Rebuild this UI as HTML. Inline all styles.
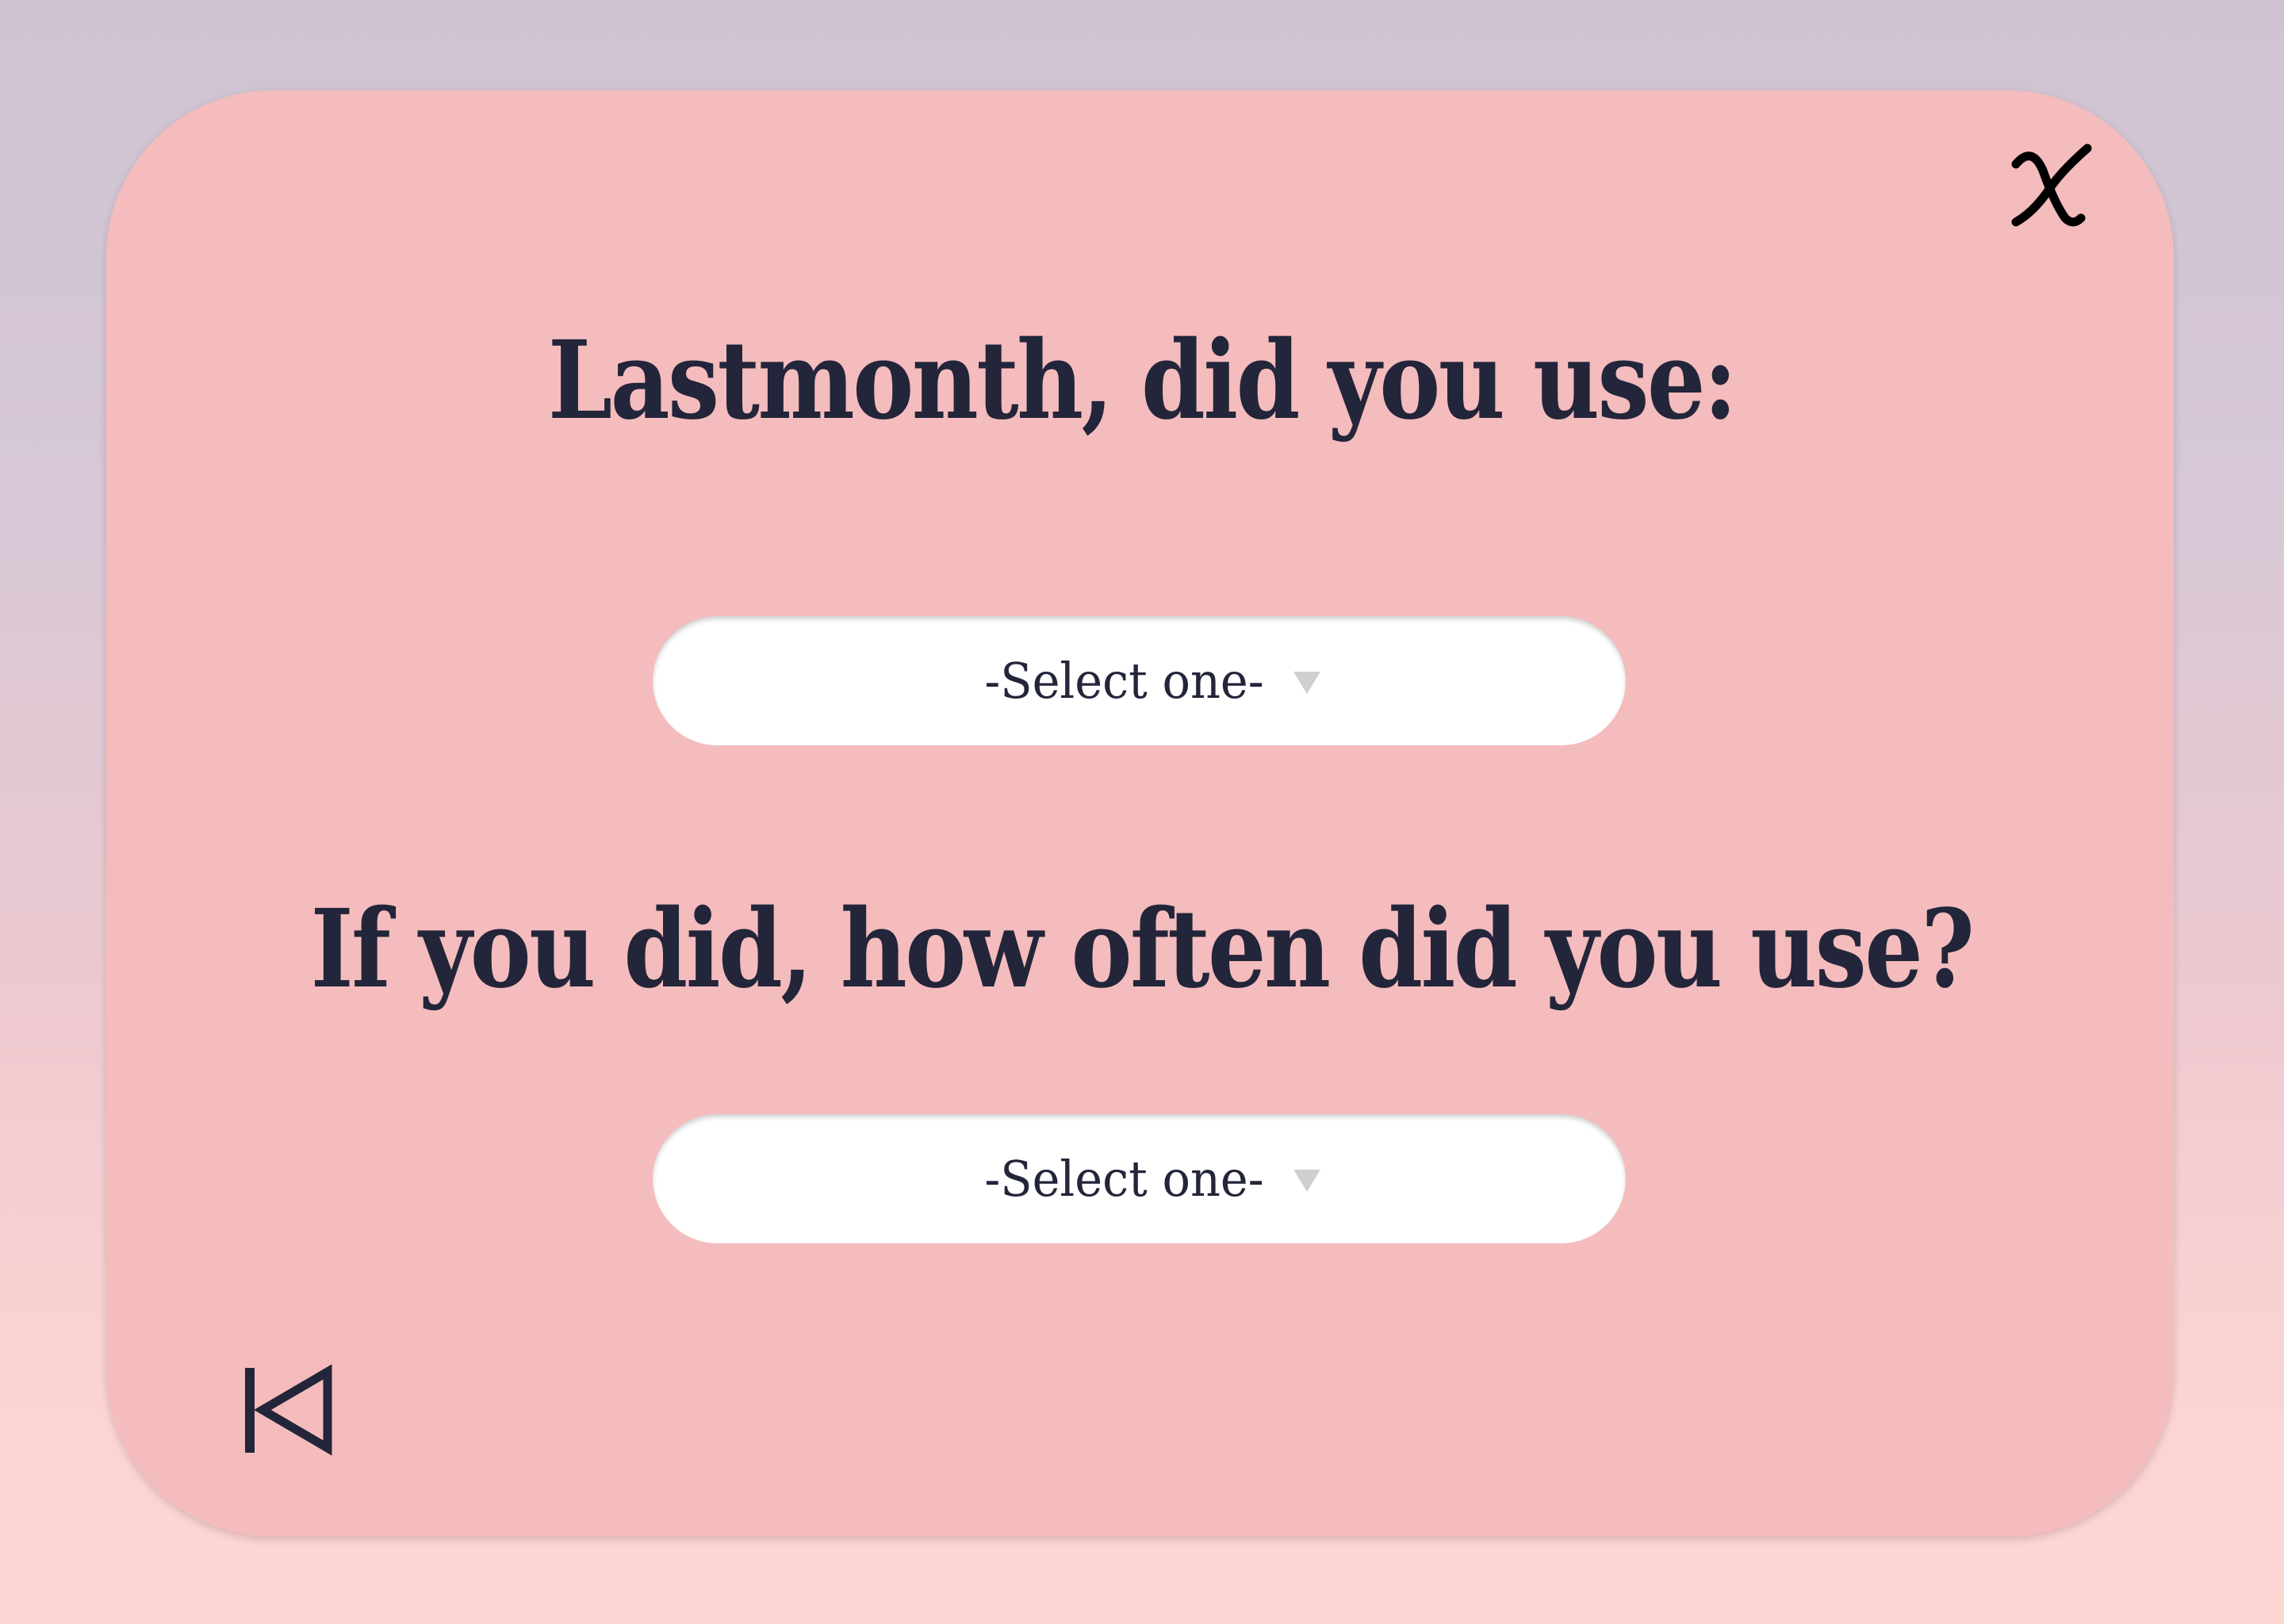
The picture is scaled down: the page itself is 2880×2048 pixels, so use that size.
<!DOCTYPE html>
<html><head><meta charset="utf-8"><style>
html,body{margin:0;padding:0;}
body{width:2880px;height:2048px;position:relative;overflow:hidden;
background:linear-gradient(180deg,#cfc3d2 0%,#d6c8d6 30%,#ecc9d0 60%,#fbd3d3 85%,#fdd6d4 100%);
font-family:"DejaVu Serif","Liberation Serif",serif;}
.card{position:absolute;left:134px;top:114px;width:2607px;height:1824px;background:#f4bcbd;border-radius:210px;box-shadow:0 4px 10px rgba(0,0,0,0.15);}
.t{position:absolute;left:0;width:2880px;text-align:center;color:#23253a;font-weight:bold;font-size:136px;letter-spacing:-3px;white-space:nowrap;transform:scaleX(0.85);transform-origin:1437px 0;}
.sel{position:absolute;left:823px;width:1227px;height:163px;background:#fff;border-radius:82px;box-shadow:inset 0 4px 6px rgba(0,0,0,0.18);}
.sel span{position:absolute;left:0;right:0;top:0;line-height:163px;text-align:center;font-family:"DejaVu Serif","Liberation Serif",serif;font-size:62px;color:#23253a;font-weight:normal;padding-right:40px;box-sizing:border-box;transform:scaleX(0.95);}
.sel i{position:absolute;left:808px;top:70px;width:0;height:0;border-left:17px solid transparent;border-right:17px solid transparent;border-top:28px solid #cfcfcf;}
</style></head><body>
<div class="card"></div>
<div class="t" style="top:400px;">Lastmonth, did you use:</div>
<div class="sel" style="top:777px;"><span>-Select one-</span><i></i></div>
<div class="t" style="top:1117px;">If you did, how often did you use?</div>
<div class="sel" style="top:1405px;"><span>-Select one-</span><i></i></div>
<svg style="position:absolute;left:2530px;top:175px" width="110" height="115" viewBox="0 0 110 115">
<path d="M12 32 Q32 8 46 40 Q60 80 74 100 Q84 110 94 100" fill="none" stroke="#000" stroke-width="11" stroke-linecap="round"/>
<path d="M102 12 Q70 40 55 62 Q35 92 12 105" fill="none" stroke="#000" stroke-width="11" stroke-linecap="round"/>
</svg>
<svg style="position:absolute;left:305px;top:1720px" width="120" height="118" viewBox="0 0 120 118">
<path d="M10 5 V112" stroke="#23253a" stroke-width="12" fill="none"/>
<path d="M108 10 V106 L26 58 Z" stroke="#23253a" stroke-width="11" fill="none" stroke-linejoin="miter"/>
</svg>
</body></html>
